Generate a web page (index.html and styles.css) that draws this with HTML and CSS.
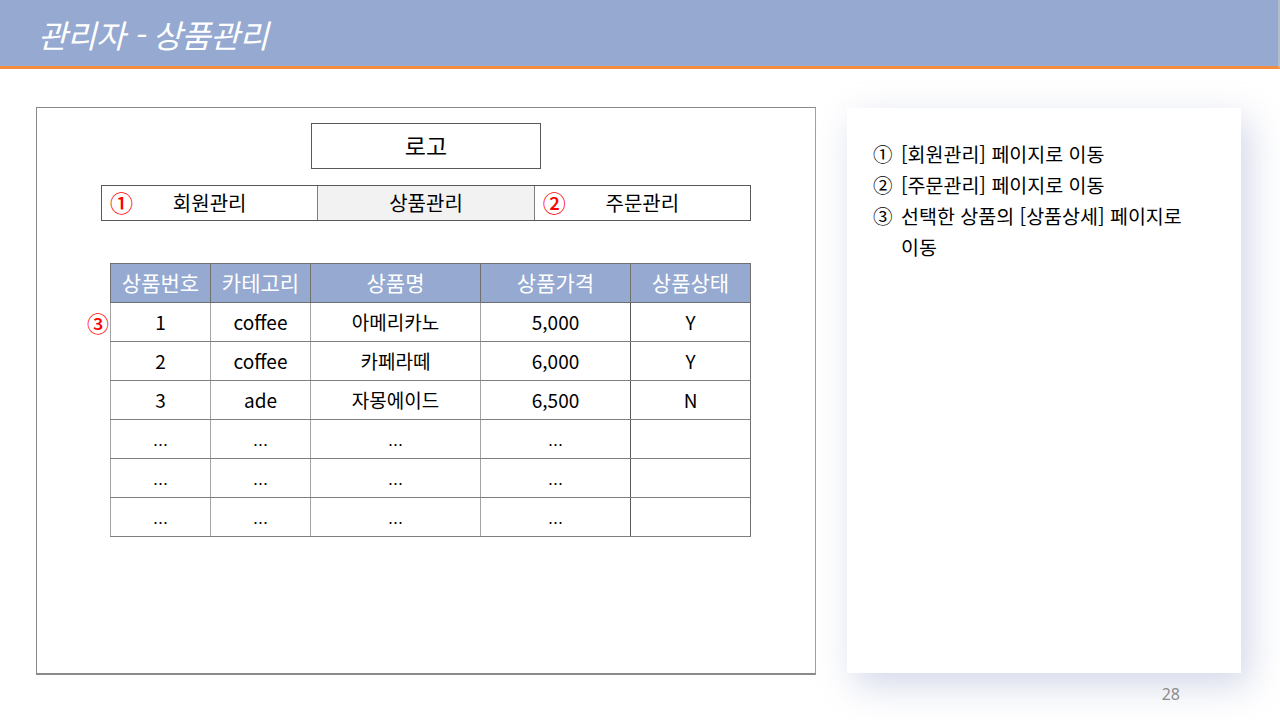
FILE: index.html
```html
<!DOCTYPE html>
<html lang="ko">
<head>
<meta charset="utf-8">
<title>관리자 - 상품관리</title>
<link rel="stylesheet" href="styles.css">
</head>
<body>
<div class="slide">
  <header class="topbar">
    <h1 class="title">관리자 - 상품관리</h1>
  </header>
  <main class="content">
    <section class="mock">
      <div class="logo">로고</div>
      <nav class="nav">
        <div class="nav-item"><span class="mark mark-nav">①</span>회원관리</div>
        <div class="nav-item active">상품관리</div>
        <div class="nav-item"><span class="mark mark-nav">②</span>주문관리</div>
      </nav>
      <div class="table-wrap">
        <span class="mark mark-row">③</span>
        <table class="grid">
          <colgroup>
            <col class="c1"><col class="c2"><col class="c3"><col class="c4"><col class="c5">
          </colgroup>
          <thead>
            <tr><th>상품번호</th><th>카테고리</th><th>상품명</th><th>상품가격</th><th>상품상태</th></tr>
          </thead>
          <tbody>
            <tr><td>1</td><td>coffee</td><td>아메리카노</td><td>5,000</td><td>Y</td></tr>
            <tr><td>2</td><td>coffee</td><td>카페라떼</td><td>6,000</td><td>Y</td></tr>
            <tr><td>3</td><td>ade</td><td>자몽에이드</td><td>6,500</td><td>N</td></tr>
            <tr class="dots"><td>…</td><td>…</td><td>…</td><td>…</td><td></td></tr>
            <tr class="dots"><td>…</td><td>…</td><td>…</td><td>…</td><td></td></tr>
            <tr class="dots"><td>…</td><td>…</td><td>…</td><td>…</td><td></td></tr>
          </tbody>
        </table>
      </div>
    </section>
    <aside class="notes">
      <ol class="note-list">
        <li><span class="num">①</span><span class="txt">[회원관리] 페이지로 이동</span></li>
        <li><span class="num">②</span><span class="txt">[주문관리] 페이지로 이동</span></li>
        <li><span class="num">③</span><span class="txt">선택한 상품의 [상품상세] 페이지로 이동</span></li>
      </ol>
    </aside>
  </main>
  <footer class="pager">28</footer>
</div>
</body>
</html>
```

FILE: styles.css
```css
* { box-sizing: border-box; }
html, body { margin: 0; padding: 0; }
body {
  width: 1280px;
  height: 720px;
  overflow: hidden;
  background: #ffffff;
  font-family: "Noto Sans CJK KR", "Noto Sans", sans-serif;
  color: #000;
}
.slide { width: 1280px; height: 720px; display: flex; flex-direction: column; }

.topbar {
  height: 69px;
  flex: none;
  background: #95a9d1;
  border-bottom: 3px solid #f68d3e;
  border-right: 2px solid #b5bccb;
  display: flex;
  align-items: center;
  padding-left: 38px;
}
.title {
  margin: 0;
  color: #fff;
  font-size: 32px;
  font-weight: 400;
  font-style: italic;
  letter-spacing: -0.5px;
  line-height: 1;
  padding-top: 2px;
}

.content {
  flex: none;
  display: flex;
  align-items: flex-start;
  padding-left: 36px;
  padding-top: 38px;
}

.mock {
  width: 780px;
  height: 568px;
  border: 1px solid #8a8a8a;
  border-bottom-width: 2px;
  border-right-color: #a0a0a0;
  display: flex;
  flex-direction: column;
  align-items: flex-start;
}
.logo {
  align-self: center;
  margin-top: 15px;
  width: 230px;
  height: 46px;
  border: 1px solid #595959;
  display: flex;
  align-items: center;
  justify-content: center;
  font-size: 23px;
  padding-bottom: 2px;
}
.nav {
  margin-top: 16px;
  margin-left: 64px;
  width: 650px;
  height: 36px;
  display: flex;
  border: 1px solid #595959;
}
.nav-item {
  position: relative;
  flex: 1;
  display: flex;
  align-items: center;
  justify-content: center;
  font-size: 20px;
  border-right: 1px solid #7f7f7f;
  padding-bottom: 1px;
}
.nav-item:last-child { border-right: none; }
.nav-item.active { background: #f2f2f2; }

.mark {
  position: absolute;
  color: #ff0000;
  font-size: 23px;
  line-height: 1;
  font-weight: 500;
}
.mark-nav { left: 8px; top: 5px; }

.table-wrap {
  position: relative;
  margin-top: 42px;
  margin-left: 73px;
}
.mark-row { left: -23px; top: 48px; font-size: 22px; }

.grid {
  border-collapse: collapse;
  width: 640px;
  table-layout: fixed;
  border: 1px solid #6f6f6f;
}
.c1 { width: 100px; }
.c2 { width: 100px; }
.c3 { width: 170px; }
.c4 { width: 150px; }
.c5 { width: 120px; }
.grid th, .grid td {
  height: 39px;
  padding: 0 0 2px 0;
  text-align: center;
  vertical-align: middle;
  font-weight: 400;
  line-height: 1;
}
.grid th {
  background: #95a9d1;
  color: #fff;
  font-size: 21px;
  border-left: 1px solid #6f6f6f;
  border-bottom: 1px solid #6f6f6f;
}
.grid td {
  font-size: 19px;
  border-left: 1px solid #a3a3a3;
  border-bottom: 1px solid #7f7f7f;
}
.grid td:nth-child(5) { border-left-color: #595959; }
.grid .dots td {
  font-size: 15px;
  padding-top: 10px;
  padding-bottom: 0;
}

.notes {
  margin-left: 31px;
  margin-top: 1px;
  width: 394px;
  height: 565px;
  background: #fff;
  box-shadow: 8px 12px 34px rgba(150, 160, 200, 0.42);
  padding: 30px 20px 0 26px;
}
.note-list {
  list-style: none;
  margin: 0;
  padding: 0;
}
.note-list li {
  display: flex;
  font-size: 19.5px;
  line-height: 31px;
}
.num { width: 28px; flex: none; }
.txt { width: 300px; }

.pager {
  flex: 1;
  text-align: right;
  padding-right: 100px;
  padding-top: 8px;
  color: #8c8c8c;
  font-family: "Noto Sans", sans-serif;
  font-size: 16px;
}
```
